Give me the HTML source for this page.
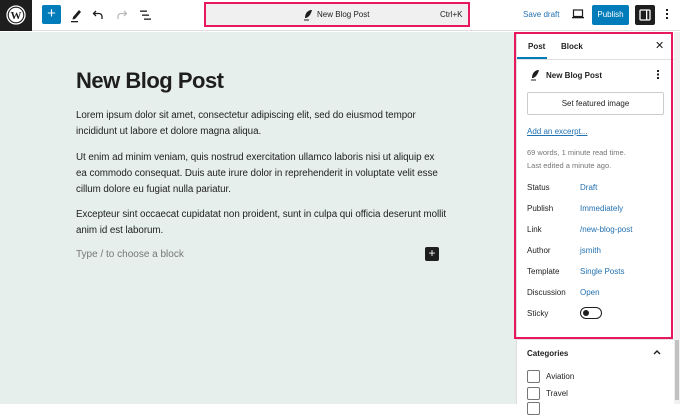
<!DOCTYPE html>
<html><head><meta charset="utf-8"><style>
*{margin:0;padding:0;box-sizing:border-box}
body{width:680px;height:404px;overflow:hidden;background:#fff;font-family:"Liberation Sans",sans-serif;position:relative;color:#1e1e1e}
.a{position:absolute}
.lk{color:#2271b1}
.sb{font-size:8px}
</style></head><body>
<div class="a" style="left:0;top:0;width:680px;height:31px;background:#fff;border-bottom:1px solid #ddd"></div>
<div class="a" style="left:0;top:0;width:32px;height:31px;background:#1e1e1e"></div>
<svg class="a" style="left:6px;top:5px" width="20" height="20" viewBox="0 0 20 20"><circle cx="10" cy="10" r="9" fill="none" stroke="#fff" stroke-width="1.3"/><circle cx="10" cy="10" r="7.2" fill="#fff"/><text x="10" y="14.2" font-size="11" font-weight="bold" text-anchor="middle" fill="#1e1e1e" font-family="Liberation Serif">W</text></svg>
<div class="a" style="left:42px;top:5px;width:19px;height:19px;background:#007cba;border-radius:2px;color:#fff;font-size:15px;line-height:18px;text-align:center">+</div>
<svg class="a" style="left:69px;top:7px" width="14" height="16" viewBox="0 0 14 16"><path d="M4 10 L10 3 L12 5 L6 12 L3.5 12.5 Z" fill="#1e1e1e"/><rect x="2" y="14" width="7" height="1.3" fill="#1e1e1e"/></svg>
<svg class="a" style="left:92px;top:9px" width="12" height="12" viewBox="0 0 12 12"><path d="M4 2 L1.5 4.5 L4 7 M1.5 4.5 H7 A3 3 0 0 1 10 7.5 V10" fill="none" stroke="#1e1e1e" stroke-width="1.3"/></svg>
<svg class="a" style="left:116px;top:9px" width="12" height="12" viewBox="0 0 12 12"><path d="M8 2 L10.5 4.5 L8 7 M10.5 4.5 H5 A3 3 0 0 0 2 7.5 V10" fill="none" stroke="#bbb" stroke-width="1.3"/></svg>
<svg class="a" style="left:139px;top:9px" width="13" height="12" viewBox="0 0 13 12"><rect x="1" y="1.5" width="7" height="1.3" fill="#1e1e1e"/><rect x="3" y="5.5" width="7" height="1.3" fill="#1e1e1e"/><rect x="5" y="9.5" width="7" height="1.3" fill="#1e1e1e"/></svg>
<div class="a" style="left:204px;top:2px;width:266px;height:25px;border:2.5px solid #e8185c;background:#f0f0f0"></div>
<svg class="a" style="left:303px;top:9px" width="10" height="12" viewBox="0 0 10 12"><path d="M2 9 C2 4 5 1 9 1 C8 5 6 8 3 9 Z" fill="#1e1e1e"/><rect x="1" y="10.5" width="5" height="1" fill="#1e1e1e"/></svg>
<div class="a sb" style="left:317px;top:10px">New Blog Post</div>
<div class="a sb" style="left:440px;top:10px;color:#1e1e1e">Ctrl+K</div>
<div class="a sb lk" style="left:523px;top:10px">Save draft</div>
<svg class="a" style="left:571px;top:8px" width="14" height="12" viewBox="0 0 14 12"><rect x="2.5" y="2" width="9" height="6.5" fill="none" stroke="#1e1e1e" stroke-width="1.2"/><rect x="1" y="9" width="12" height="1.3" fill="#1e1e1e"/></svg>
<div class="a" style="left:592px;top:5px;width:37px;height:20px;background:#007cba;border-radius:2px;color:#fff;font-size:8px;line-height:20px;text-align:center">Publish</div>
<div class="a" style="left:635px;top:5px;width:20px;height:20px;background:#1e1e1e;border-radius:2px"></div>
<svg class="a" style="left:638px;top:8px" width="14" height="14" viewBox="0 0 14 14"><rect x="2" y="2" width="10" height="10" rx="1" fill="none" stroke="#fff" stroke-width="1.3"/><rect x="8" y="2" width="1.3" height="10" fill="#fff"/></svg>
<div class="a" style="left:666px;top:9px;width:2px;height:2px;background:#1e1e1e;box-shadow:0 4px 0 #1e1e1e,0 8px 0 #1e1e1e"></div>
<div class="a" style="left:0;top:32px;width:516px;height:372px;background:#e6efeb"></div>
<div class="a" style="left:76px;top:68px;font-size:22px;font-weight:bold;letter-spacing:-0.5px">New Blog Post</div>
<div class="a" style="left:76px;top:108px;font-size:9.8px;line-height:16px;color:#1e1e1e;letter-spacing:-0.05px;white-space:nowrap">
<p style="margin-bottom:10px">Lorem ipsum dolor sit amet, consectetur adipiscing elit, sed do eiusmod tempor<br>incididunt ut labore et dolore magna aliqua.</p>
<p style="margin-bottom:9px">Ut enim ad minim veniam, quis nostrud exercitation ullamco laboris nisi ut aliquip ex<br>ea commodo consequat. Duis aute irure dolor in reprehenderit in voluptate velit esse<br>cillum dolore eu fugiat nulla pariatur.</p>
<p>Excepteur sint occaecat cupidatat non proident, sunt in culpa qui officia deserunt mollit<br>anim id est laborum.</p>
</div>
<div class="a" style="left:76px;top:249px;font-size:10px;color:#777">Type / to choose a block</div>
<div class="a" style="left:425px;top:247px;width:14px;height:14px;background:#1e1e1e;border-radius:2px;color:#fff;font-size:12px;line-height:13px;text-align:center">+</div>
<div class="a" style="left:516px;top:32px;width:1px;height:372px;background:#ddd"></div>
<div class="a" style="left:674px;top:32px;width:6px;height:372px;background:#f0f0f0"></div>
<div class="a" style="left:675px;top:340px;width:4px;height:60px;background:#c1c1c1"></div>
<div class="a" style="left:517px;top:59px;width:157px;height:1px;background:#e0e0e0"></div>
<div class="a" style="left:517px;top:57px;width:30px;height:2px;background:#007cba"></div>
<div class="a sb" style="left:528px;top:42px;font-weight:bold">Post</div>
<div class="a sb" style="left:561px;top:42px;font-weight:bold">Block</div>
<div class="a" style="left:655px;top:39px;font-size:11px">✕</div>
<svg class="a" style="left:530px;top:69px" width="10" height="12" viewBox="0 0 10 12"><path d="M2 9 C2 4 5 1 9 1 C8 5 6 8 3 9 Z" fill="#1e1e1e"/><rect x="1" y="10.5" width="5" height="1" fill="#1e1e1e"/></svg>
<div class="a sb" style="left:546px;top:71px;font-weight:bold">New Blog Post</div>
<div class="a" style="left:657px;top:70px;width:2px;height:2px;background:#1e1e1e;box-shadow:0 3.5px 0 #1e1e1e,0 7px 0 #1e1e1e"></div>
<div class="a" style="left:527px;top:92px;width:137px;height:23px;border:1px solid #ccc;border-radius:2px;font-size:8px;line-height:21px;text-align:center">Set featured image</div>
<div class="a sb lk" style="left:527px;top:127px;text-decoration:underline">Add an excerpt...</div>
<div class="a" style="left:527px;top:146px;font-size:7.5px;color:#757575;line-height:13px">69 words, 1 minute read time.<br>Last edited a minute ago.</div>
<div class="a sb" style="left:527px;top:183px">Status</div><div class="a sb lk" style="left:580px;top:183px">Draft</div>
<div class="a sb" style="left:527px;top:204px">Publish</div><div class="a sb lk" style="left:580px;top:204px">Immediately</div>
<div class="a sb" style="left:527px;top:225px">Link</div><div class="a sb lk" style="left:580px;top:225px">/new-blog-post</div>
<div class="a sb" style="left:527px;top:246px">Author</div><div class="a sb lk" style="left:580px;top:246px">jsmith</div>
<div class="a sb" style="left:527px;top:267px">Template</div><div class="a sb lk" style="left:580px;top:267px">Single Posts</div>
<div class="a sb" style="left:527px;top:288px">Discussion</div><div class="a sb lk" style="left:580px;top:288px">Open</div>
<div class="a sb" style="left:527px;top:309px">Sticky</div>
<div class="a" style="left:580px;top:307px;width:22px;height:12px;border:1px solid #1e1e1e;border-radius:6px"></div>
<div class="a" style="left:583px;top:310px;width:6px;height:6px;background:#1e1e1e;border-radius:50%"></div>
<div class="a" style="left:514px;top:32px;width:159px;height:307px;border:2.5px solid #e8185c"></div>
<div class="a" style="left:517px;top:339px;width:157px;height:1px;background:#e0e0e0"></div>
<div class="a sb" style="left:527px;top:349px;font-weight:bold">Categories</div>
<svg class="a" style="left:652px;top:348px" width="10" height="8" viewBox="0 0 10 8"><path d="M2 6 L5 3 L8 6" fill="none" stroke="#1e1e1e" stroke-width="1.4"/></svg>
<div class="a" style="left:527px;top:370px;width:13px;height:13px;border:1px solid #757575;border-radius:2px"></div>
<div class="a sb" style="left:546px;top:372px">Aviation</div>
<div class="a" style="left:527px;top:387px;width:13px;height:13px;border:1px solid #757575;border-radius:2px"></div>
<div class="a sb" style="left:546px;top:389px">Travel</div>
<div class="a" style="left:527px;top:402px;width:13px;height:13px;border:1px solid #757575;border-radius:2px"></div>
</body></html>
